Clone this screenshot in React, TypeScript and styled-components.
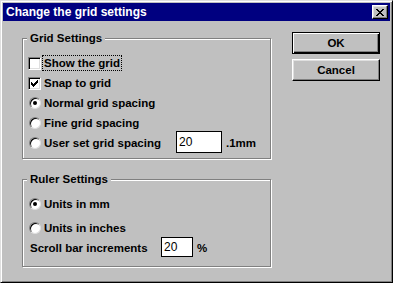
import styled, { createGlobalStyle } from 'styled-components';

const Global = createGlobalStyle`
  html, body {
    margin: 0;
    padding: 0;
    background: #c0c0c0;
  }
  body {
    font-family: "Liberation Sans", Arial, sans-serif;
  }
`;

const Window = styled.div`
  width: 393px;
  height: 283px;
  box-sizing: border-box;
  background: #c0c0c0;
  border: 1px solid;
  border-color: #dfdfdf #000 #000 #dfdfdf;
  box-shadow: inset 1px 1px #fff, inset -1px -1px #808080;
  padding: 2px;
  display: flex;
  flex-direction: column;
`;

const TitleBar = styled.div`
  height: 18px;
  flex-shrink: 0;
  background: #000080;
  color: #fff;
  display: flex;
  align-items: center;
  justify-content: space-between;
  padding: 0 2px 0 3px;
  font-weight: bold;
  font-size: 12px;
`;

const CloseButton = styled.button`
  width: 16px;
  height: 14px;
  box-sizing: border-box;
  padding: 0;
  background: #c0c0c0;
  border: 1px solid;
  border-color: #fff #000 #000 #fff;
  box-shadow: inset -1px -1px #808080, inset 1px 1px #dfdfdf;
  display: flex;
  align-items: center;
  justify-content: center;
`;

const Body = styled.div`
  display: flex;
  align-items: flex-start;
  gap: 21px;
  padding: 11px 0 0 19px;
  font-size: 11.5px;
  font-weight: bold;
  color: #000;
`;

const LeftColumn = styled.div`
  width: 249px;
  display: flex;
  flex-direction: column;
  gap: 14px;
`;

const Group = styled.fieldset<{ $bottom: number }>`
  margin: 0;
  min-width: 0;
  padding: 0 4px ${p => p.$bottom}px;
  border: 1px solid #808080;
  box-shadow: inset 1px 1px #fff, 1px 1px #fff;
`;

const Legend = styled.legend`
  padding: 0 3px;
  line-height: 13px;
  background: #c0c0c0;
`;

const Rows = styled.div`
  display: flex;
  flex-direction: column;
  margin-top: 8px;
`;

const Row = styled.div<{ $space?: number }>`
  display: flex;
  align-items: center;
  height: 20px;
  padding-left: 1px;
  margin-top: ${p => p.$space ?? 0}px;
`;

const Label = styled.span<{ $focused?: boolean; $width?: number }>`
  padding: 1px;
  line-height: 12px;
  border: 1px dotted ${p => (p.$focused ? '#000' : 'transparent')};
  white-space: nowrap;
  ${p => (p.$width ? `width: ${p.$width}px; box-sizing: border-box;` : '')}
`;

const CheckBox = styled.span`
  width: 13px;
  height: 13px;
  box-sizing: border-box;
  flex-shrink: 0;
  background: #fff;
  border: 1px solid;
  border-color: #808080 #fff #fff #808080;
  box-shadow: inset 1px 1px #000, inset -1px -1px #dfdfdf;
  display: flex;
  align-items: center;
  justify-content: center;
  margin-right: 1px;
`;

const Radio = styled.span<{ $on?: boolean }>`
  width: 12px;
  height: 12px;
  box-sizing: border-box;
  flex-shrink: 0;
  margin-left: 1px;
  margin-right: 1px;
  border-radius: 50%;
  background: #fff;
  border: 1px solid;
  border-color: #808080 #dfdfdf #dfdfdf #808080;
  box-shadow: inset 1px 1px #000;
  display: flex;
  align-items: center;
  justify-content: center;
  &::after {
    content: '';
    width: 4px;
    height: 4px;
    border-radius: 50%;
    background: ${p => (p.$on ? '#000' : 'transparent')};
  }
`;

const Field = styled.div<{ $w: number; $h: number }>`
  width: ${p => p.$w}px;
  height: ${p => p.$h}px;
  box-sizing: border-box;
  flex-shrink: 0;
  background: #fff;
  border: 1px solid #000;
  padding-left: 2px;
  display: flex;
  align-items: center;
  font-weight: normal;
  font-size: 12px;
  margin-bottom: 2px;
`;

const Unit = styled.span`
  margin-left: 4px;
`;

const RightColumn = styled.div`
  display: flex;
  flex-direction: column;
  gap: 5px;
`;

const Button = styled.button<{ $default?: boolean }>`
  width: 88px;
  height: 22px;
  box-sizing: border-box;
  padding: 0;
  background: #c0c0c0;
  font-family: "Liberation Sans", Arial, sans-serif;
  font-weight: bold;
  font-size: 11.5px;
  color: #000;
  border: 1px solid;
  border-color: ${p => (p.$default ? '#000' : '#fff #000 #000 #fff')};
  box-shadow: ${p =>
    p.$default
      ? 'inset 1px 1px #fff, inset -1px -1px #000, inset -2px -2px #808080'
      : 'inset -1px -1px #808080, inset 1px 1px #dfdfdf'};
`;

const checkCols = [2, 3, 4, 3, 2, 1, 0];
const CheckMark = () => (
  <svg width="7" height="7" viewBox="0 0 7 7" shapeRendering="crispEdges">
    {checkCols.map((y, x) => (
      <rect key={x} x={x} y={y} width="1" height="3" fill="#000" />
    ))}
  </svg>
);

const xRows: [number, number][][] = [
  [[0, 2], [6, 2]],
  [[1, 2], [5, 2]],
  [[2, 4]],
  [[3, 2]],
  [[2, 4]],
  [[1, 2], [5, 2]],
  [[0, 2], [6, 2]],
];
const CloseGlyph = () => (
  <svg width="8" height="7" viewBox="0 0 8 7" shapeRendering="crispEdges">
    {xRows.map((segs, y) =>
      segs.map(([x, w]) => <rect key={`${y}-${x}`} x={x} y={y} width={w} height="1" fill="#000" />)
    )}
  </svg>
);

export default function App() {
  return (
    <>
      <Global />
      <Window>
        <TitleBar>
          <span>Change the grid settings</span>
          <CloseButton aria-label="Close">
            <CloseGlyph />
          </CloseButton>
        </TitleBar>
        <Body>
          <LeftColumn>
            <Group $bottom={5}>
              <Legend>Grid Settings</Legend>
              <Rows>
                <Row>
                  <CheckBox />
                  <Label $focused>Show the grid</Label>
                </Row>
                <Row>
                  <CheckBox>
                    <CheckMark />
                  </CheckBox>
                  <Label>Snap to grid</Label>
                </Row>
                <Row>
                  <Radio $on />
                  <Label>Normal grid spacing</Label>
                </Row>
                <Row>
                  <Radio />
                  <Label>Fine grid spacing</Label>
                </Row>
                <Row>
                  <Radio />
                  <Label $width={134}>User set grid spacing</Label>
                  <Field $w={46} $h={22}>20</Field>
                  <Unit>.1mm</Unit>
                </Row>
              </Rows>
            </Group>
            <Group $bottom={8}>
              <Legend>Ruler Settings</Legend>
              <Rows>
                <Row>
                  <Radio $on />
                  <Label>Units in mm</Label>
                </Row>
                <Row $space={4}>
                  <Radio />
                  <Label>Units in inches</Label>
                </Row>
                <Row>
                  <Label $width={133}>Scroll bar increments</Label>
                  <Field $w={32} $h={20}>20</Field>
                  <Unit>%</Unit>
                </Row>
              </Rows>
            </Group>
          </LeftColumn>
          <RightColumn>
            <Button $default>OK</Button>
            <Button>Cancel</Button>
          </RightColumn>
        </Body>
      </Window>
    </>
  );
}
